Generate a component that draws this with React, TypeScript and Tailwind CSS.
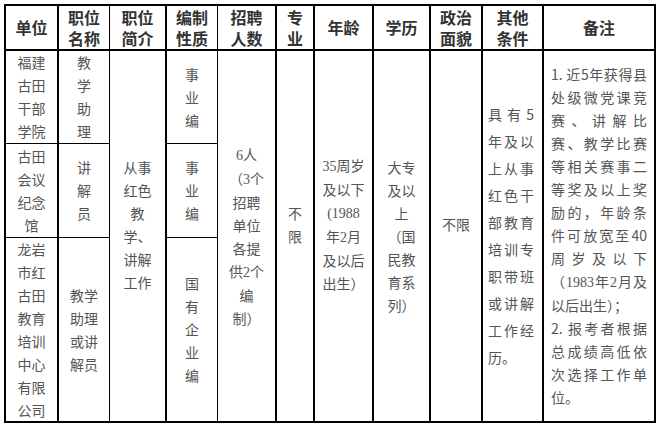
import React from "react";

const serif = "font-['Liberation_Serif',serif]";

const hd =
  "flex flex-col items-center justify-center text-center text-[16px] leading-[21px] font-bold text-[#333] border-b-2 border-black";
const bd =
  "flex flex-col items-center justify-center text-center text-[14px] leading-[23px] text-[#555] border-black";

function L({ items }: { items: React.ReactNode[] }) {
  return (
    <>
      {items.map((t, i) => (
        <div key={i} className="whitespace-nowrap">
          {t}
        </div>
      ))}
    </>
  );
}

const J = "text-justify [text-align-last:justify] whitespace-nowrap";
const Lft = "text-left whitespace-nowrap";

export default function App() {
  const S = (s: string) => <span className={serif}>{s}</span>;
  return (
    <div className="bg-white w-[659px] h-[428px] pt-[4px] pl-[4px] font-['Noto_Sans_CJK_SC',sans-serif]">
      <div className="grid w-max grid-cols-[53px_51px_57px_51px_59px_38px_59px_57px_52px_61px_112px] grid-rows-[45px_93px_94px_185px] border-l-2 border-t-2 border-black">
        {/* header */}
        <div className={`${hd} border-r-2 col-start-1 row-start-1`}>单位</div>
        <div className={`${hd} border-r col-start-2 row-start-1`}>
          <div>职位</div>
          <div>名称</div>
        </div>
        <div className={`${hd} border-r-2 col-start-3 row-start-1`}>
          <div>职位</div>
          <div>简介</div>
        </div>
        <div className={`${hd} border-r col-start-4 row-start-1`}>
          <div>编制</div>
          <div>性质</div>
        </div>
        <div className={`${hd} border-r-2 col-start-5 row-start-1`}>
          <div>招聘</div>
          <div>人数</div>
        </div>
        <div className={`${hd} border-r-2 col-start-6 row-start-1`}>
          <div>专</div>
          <div>业</div>
        </div>
        <div className={`${hd} border-r-2 col-start-7 row-start-1`}>年龄</div>
        <div className={`${hd} border-r-2 col-start-8 row-start-1`}>学历</div>
        <div className={`${hd} border-r-2 col-start-9 row-start-1`}>
          <div>政治</div>
          <div>面貌</div>
        </div>
        <div className={`${hd} border-r-2 col-start-10 row-start-1`}>
          <div>其他</div>
          <div>条件</div>
        </div>
        <div className={`${hd} border-r-2 col-start-11 row-start-1`}>备注</div>

        {/* 单位 */}
        <div className={`${bd} border-r-2 border-b col-start-1 row-start-2`}>
          <L items={["福建", "古田", "干部", "学院"]} />
        </div>
        <div className={`${bd} border-r-2 border-b col-start-1 row-start-3`}>
          <L items={["古田", "会议", "纪念", "馆"]} />
        </div>
        <div className={`${bd} border-r-2 border-b-2 col-start-1 row-start-4`}>
          <L items={["龙岩", "市红", "古田", "教育", "培训", "中心", "有限", "公司"]} />
        </div>

        {/* 职位名称 */}
        <div className={`${bd} border-r border-b col-start-2 row-start-2`}>
          <L items={["教", "学", "助", "理"]} />
        </div>
        <div className={`${bd} border-r border-b col-start-2 row-start-3`}>
          <L items={["讲", "解", "员"]} />
        </div>
        <div className={`${bd} border-r border-b-2 col-start-2 row-start-4`}>
          <L items={["教学", "助理", "或讲", "解员"]} />
        </div>

        {/* 职位简介 */}
        <div className={`${bd} border-r-2 border-b-2 col-start-3 row-start-2 row-span-3 pb-[23px]`}>
          <L items={["从事", "红色", "教", "学、", "讲解", "工作"]} />
        </div>

        {/* 编制性质 */}
        <div className={`${bd} border-r border-b col-start-4 row-start-2`}>
          <L items={["事", "业", "编"]} />
        </div>
        <div className={`${bd} border-r border-b col-start-4 row-start-3`}>
          <L items={["事", "业", "编"]} />
        </div>
        <div className={`${bd} border-r border-b-2 col-start-4 row-start-4`}>
          <L items={["国", "有", "企", "业", "编"]} />
        </div>

        {/* 招聘人数 */}
        <div className={`${bd} border-r-2 border-b-2 col-start-5 row-start-2 row-span-3`}>
          <L
            items={[
              <>{S("6")}人</>,
              <>（{S("3")}个</>,
              "招聘",
              "单位",
              "各提",
              <>供{S("2")}个</>,
              "编",
              "制）",
            ]}
          />
        </div>

        {/* 专业 */}
        <div className={`${bd} border-r-2 border-b-2 col-start-6 row-start-2 row-span-3 pb-[23px]`}>
          <L items={["不", "限"]} />
        </div>

        {/* 年龄 */}
        <div className={`${bd} border-r-2 border-b-2 col-start-7 row-start-2 row-span-3 pb-[23px]`}>
          <L
            items={[
              <>{S("35")}周岁</>,
              "及以下",
              <>{S("(1988")}</>,
              <>年{S("2")}月</>,
              "及以后",
              "出生）",
            ]}
          />
        </div>

        {/* 学历 */}
        <div className={`${bd} border-r-2 border-b-2 col-start-8 row-start-2 row-span-3`}>
          <L items={["大专", "及以", "上", "（国", "民教", "育系", "列）"]} />
        </div>

        {/* 政治面貌 */}
        <div className={`${bd} border-r-2 border-b-2 col-start-9 row-start-2 row-span-3 pb-[23px]`}>
          <L items={["不限"]} />
        </div>

        {/* 其他条件 */}
        <div className="flex flex-col justify-center text-[14px] leading-[27px] text-[#555] border-r-2 border-b-2 border-black col-start-10 row-start-2 row-span-3 pl-[5px] pr-[8px]">
          {["具有5", "年及以", "上从事", "红色干", "部教育", "培训专", "职带班", "或讲解", "工作经"].map((t, i) => (
            <div key={i} className={J}>
              {t}
            </div>
          ))}
          <div className={Lft}>历。</div>
        </div>

        {/* 备注 */}
        <div className="flex flex-col justify-center text-[14px] leading-[23px] text-[#555] border-r-2 border-b-2 border-black col-start-11 row-start-2 row-span-3 pl-[7px] pr-[7px]">
          <div className={J}>1. 近5年获得县</div>
          <div className={J}>处级微党课竞</div>
          <div className={J}>赛、讲解比</div>
          <div className={J}>赛、教学比赛</div>
          <div className={J}>等相关赛事二</div>
          <div className={J}>等奖及以上奖</div>
          <div className={J}>励的，年龄条</div>
          <div className={J}>件可放宽至40</div>
          <div className={J}>周岁及以下</div>
          <div className={J}>
            （{S("1983")}年{S("2")}月及
          </div>
          <div className={Lft}>以后出生）；</div>
          <div className={J}>2. 报考者根据</div>
          <div className={J}>总成绩高低依</div>
          <div className={J}>次选择工作单</div>
          <div className={Lft}>位。</div>
        </div>
      </div>
    </div>
  );
}
